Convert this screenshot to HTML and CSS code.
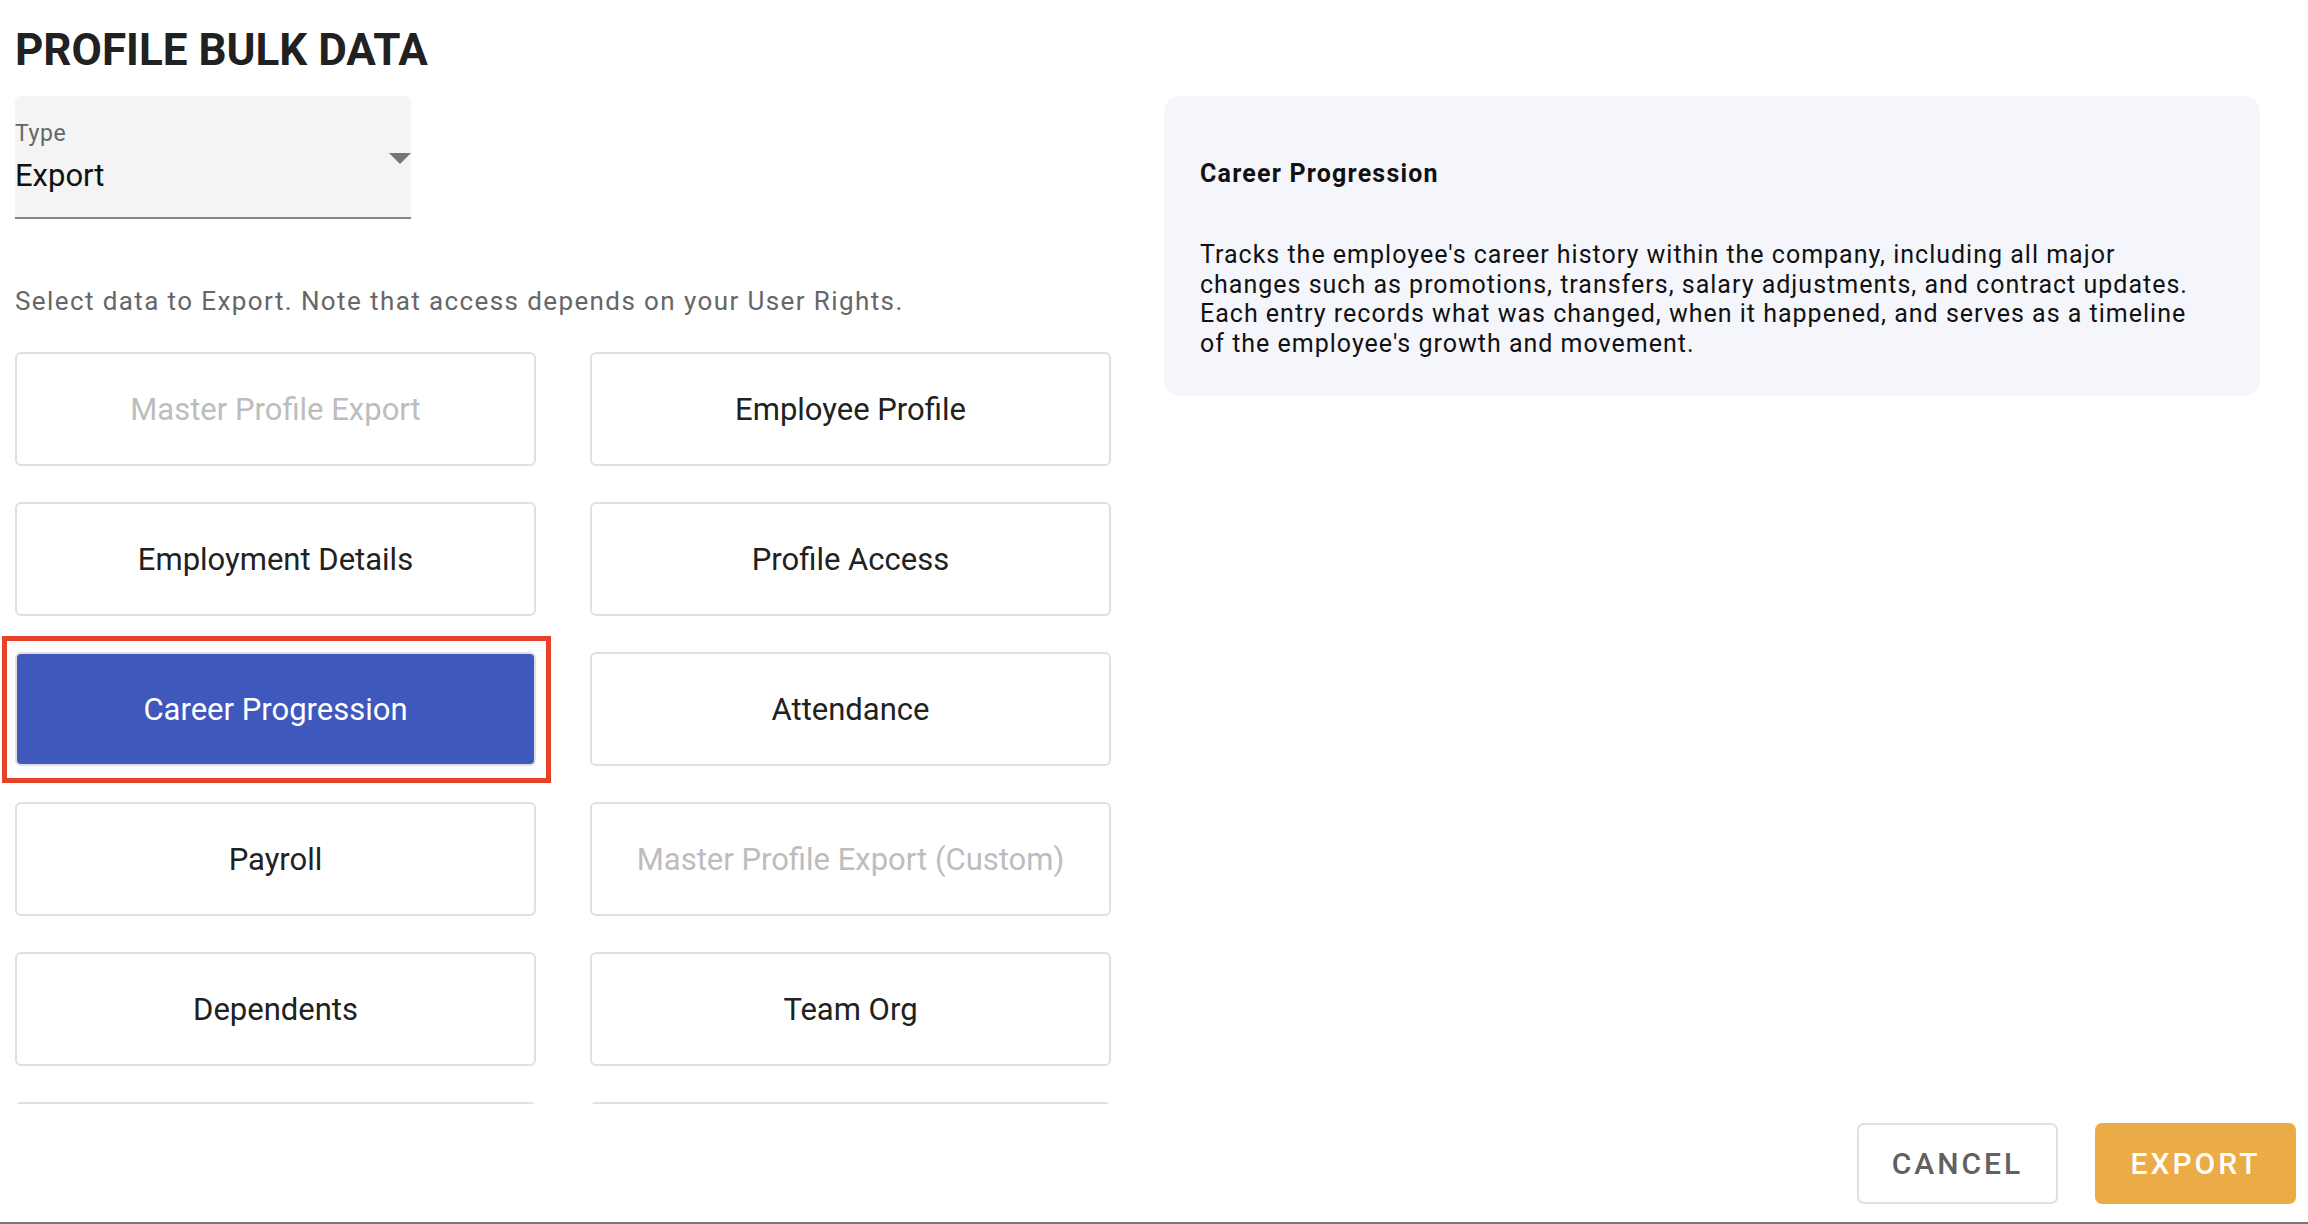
FILE: index.html
```html
<!DOCTYPE html>
<html lang="en">
  <head>
    <meta charset="UTF-8" />
    <meta name="viewport" content="width=device-width, initial-scale=1.0" />
    <title>Profile Bulk Data</title>
    <link rel="stylesheet" href="styles.css">
  </head>
  <body>
    <div class="page">
      <h1 class="title">PROFILE BULK DATA</h1>
      <div class="content">
        <div class="left">
          <div class="select">
            <div class="select_text">
              <div class="select_label">Type</div>
              <div class="select_value">Export</div>
            </div>
            <svg class="select_arrow" width="22" height="11" viewBox="0 0 22 11">
              <polygon points="0,0 22,0 11,11" fill="#757575" />
            </svg>
          </div>
          <p class="hint">Select data to Export. Note that access depends on your User Rights.</p>
          <div class="cards">
            <div class="card disabled">Master Profile Export</div>
            <div class="card">Employee Profile</div>
            <div class="card">Employment Details</div>
            <div class="card">Profile Access</div>
            <div class="card selected">Career Progression</div>
            <div class="card">Attendance</div>
            <div class="card">Payroll</div>
            <div class="card disabled">Master Profile Export (Custom)</div>
            <div class="card">Dependents</div>
            <div class="card">Team Org</div>
            <div class="card"></div>
            <div class="card"></div>
          </div>
        </div>
        <div class="info">
          <h2 class="info_title">Career Progression</h2>
          <p class="info_text">Tracks the employee's career history within the company, including all major changes such as promotions, transfers, salary adjustments, and contract updates. Each entry records what was changed, when it happened, and serves as a timeline<br>of the employee's growth and movement.</p>
        </div>
      </div>
      <div class="footer">
        <button class="btn btn_cancel" type="button">CANCEL</button>
        <button class="btn btn_export" type="button">EXPORT</button>
      </div>
    </div>
  </body>
</html>
```

FILE: styles.css
```css
* {
  box-sizing: border-box;
}
body {
  margin: 0;
  font-family: Roboto, "Liberation Sans", sans-serif;
  color: #212121;
  background: #fff;
}
.page {
  height: 100vh;
  display: flex;
  flex-direction: column;
  overflow: hidden;
}
.title {
  margin: 23px 0 19px 15px;
  font-size: 44px;
  line-height: 54px;
  font-weight: 700;
  color: #212121;
}
.content {
  flex: 1;
  min-height: 0;
  display: grid;
  grid-template-columns: 1125px 1fr;
  column-gap: 39px;
  padding-right: 48px;
}
.left {
  display: flex;
  flex-direction: column;
  min-height: 0;
  padding-left: 15px;
}
.select {
  width: 396px;
  height: 123px;
  display: flex;
  justify-content: space-between;
  background: #f4f4f4;
  border-bottom: 2px solid #858585;
  border-radius: 6px 6px 0 0;
  padding-top: 25px;
}
.select_label {
  font-size: 23px;
  line-height: 26px;
  color: #666;
  letter-spacing: 0.6px;
}
.select_value {
  margin-top: 11px;
  font-size: 31px;
  line-height: 36px;
  color: #111;
}
.select_arrow {
  margin-top: 32px;
}
.hint {
  margin: 67px 0 0 0;
  font-size: 26px;
  line-height: 30px;
  color: #666;
  letter-spacing: 1.4px;
}
.cards {
  flex: 1;
  min-height: 0;
  overflow: hidden;
  margin: 18px 0 0 -15px;
  padding: 18px 14px 0 15px;
  display: grid;
  grid-template-columns: 1fr 1fr;
  grid-auto-rows: 114px;
  column-gap: 54px;
  row-gap: 36px;
}
.card {
  position: relative;
  display: flex;
  align-items: center;
  justify-content: center;
  border: 2px solid #e0e0e0;
  border-radius: 6px;
  background: #fff;
  font-size: 31px;
  color: #212121;
}
.card.disabled {
  color: #bdbdbd;
}
.card.selected {
  background: #3f58bb;
  color: #fff;
}
.card.selected::after {
  content: "";
  position: absolute;
  top: -18px;
  left: -15px;
  right: -17px;
  bottom: -19px;
  border: 5px solid #e8412a;
}
.info {
  align-self: start;
  background: #f5f6fb;
  border-radius: 16px;
  padding: 63px 36px 38px 36px;
}
.info_title {
  margin: 0;
  font-size: 25px;
  line-height: 29px;
  font-weight: 700;
  color: #111;
  letter-spacing: 1.2px;
}
.info_text {
  margin: 52px 0 0 0;
  font-size: 25px;
  line-height: 29.5px;
  color: #111;
  letter-spacing: 1px;
}
.footer {
  display: flex;
  justify-content: flex-end;
  gap: 37px;
  padding: 19px 12px 18px 0;
  border-bottom: 2px solid #757575;
}
.btn {
  width: 201px;
  height: 81px;
  border-radius: 7px;
  font-family: Roboto, "Liberation Sans", sans-serif;
  font-size: 30px;
  font-weight: 500;
  letter-spacing: 3px;
  cursor: pointer;
}
.btn_cancel {
  background: #fff;
  border: 2px solid #e0e0e0;
  color: #616161;
}
.btn_export {
  background: #ebab46;
  border: none;
  color: #fff;
}
```
